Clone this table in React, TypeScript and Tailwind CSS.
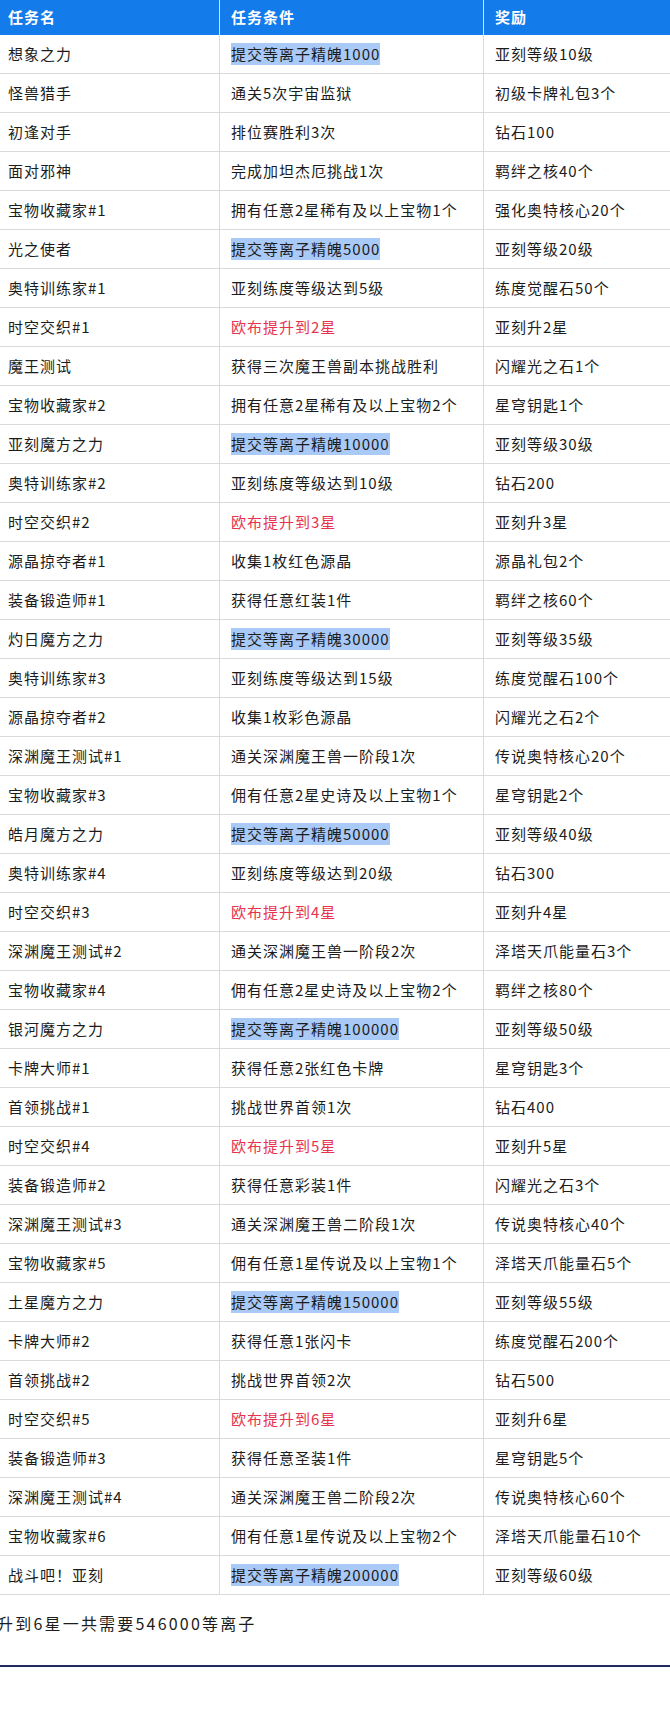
type Kind = "plain" | "hl" | "red"

type Row = [string, string, string, Kind?]

const ROWS: Row[] = [
  ["想象之力", "提交等离子精魄1000", "亚刻等级10级", "hl"],
  ["怪兽猎手", "通关5次宇宙监狱", "初级卡牌礼包3个"],
  ["初逢对手", "排位赛胜利3次", "钻石100"],
  ["面对邪神", "完成加坦杰厄挑战1次", "羁绊之核40个"],
  ["宝物收藏家#1", "拥有任意2星稀有及以上宝物1个", "强化奥特核心20个"],
  ["光之使者", "提交等离子精魄5000", "亚刻等级20级", "hl"],
  ["奥特训练家#1", "亚刻练度等级达到5级", "练度觉醒石50个"],
  ["时空交织#1", "欧布提升到2星", "亚刻升2星", "red"],
  ["魔王测试", "获得三次魔王兽副本挑战胜利", "闪耀光之石1个"],
  ["宝物收藏家#2", "拥有任意2星稀有及以上宝物2个", "星穹钥匙1个"],
  ["亚刻魔方之力", "提交等离子精魄10000", "亚刻等级30级", "hl"],
  ["奥特训练家#2", "亚刻练度等级达到10级", "钻石200"],
  ["时空交织#2", "欧布提升到3星", "亚刻升3星", "red"],
  ["源晶掠夺者#1", "收集1枚红色源晶", "源晶礼包2个"],
  ["装备锻造师#1", "获得任意红装1件", "羁绊之核60个"],
  ["灼日魔方之力", "提交等离子精魄30000", "亚刻等级35级", "hl"],
  ["奥特训练家#3", "亚刻练度等级达到15级", "练度觉醒石100个"],
  ["源晶掠夺者#2", "收集1枚彩色源晶", "闪耀光之石2个"],
  ["深渊魔王测试#1", "通关深渊魔王兽一阶段1次", "传说奥特核心20个"],
  ["宝物收藏家#3", "佣有任意2星史诗及以上宝物1个", "星穹钥匙2个"],
  ["皓月魔方之力", "提交等离子精魄50000", "亚刻等级40级", "hl"],
  ["奥特训练家#4", "亚刻练度等级达到20级", "钻石300"],
  ["时空交织#3", "欧布提升到4星", "亚刻升4星", "red"],
  ["深渊魔王测试#2", "通关深渊魔王兽一阶段2次", "泽塔天爪能量石3个"],
  ["宝物收藏家#4", "佣有任意2星史诗及以上宝物2个", "羁绊之核80个"],
  ["银河魔方之力", "提交等离子精魄100000", "亚刻等级50级", "hl"],
  ["卡牌大师#1", "获得任意2张红色卡牌", "星穹钥匙3个"],
  ["首领挑战#1", "挑战世界首领1次", "钻石400"],
  ["时空交织#4", "欧布提升到5星", "亚刻升5星", "red"],
  ["装备锻造师#2", "获得任意彩装1件", "闪耀光之石3个"],
  ["深渊魔王测试#3", "通关深渊魔王兽二阶段1次", "传说奥特核心40个"],
  ["宝物收藏家#5", "佣有任意1星传说及以上宝物1个", "泽塔天爪能量石5个"],
  ["土星魔方之力", "提交等离子精魄150000", "亚刻等级55级", "hl"],
  ["卡牌大师#2", "获得任意1张闪卡", "练度觉醒石200个"],
  ["首领挑战#2", "挑战世界首领2次", "钻石500"],
  ["时空交织#5", "欧布提升到6星", "亚刻升6星", "red"],
  ["装备锻造师#3", "获得任意圣装1件", "星穹钥匙5个"],
  ["深渊魔王测试#4", "通关深渊魔王兽二阶段2次", "传说奥特核心60个"],
  ["宝物收藏家#6", "佣有任意1星传说及以上宝物2个", "泽塔天爪能量石10个"],
  ["战斗吧！亚刻", "提交等离子精魄200000", "亚刻等级60级", "hl"],
]

const FONT = "font-['Noto_Sans_CJK_SC','Noto_Sans',sans-serif]"

function Condition({ text, kind }: { text: string; kind?: Kind }) {
  if (kind === "hl") return <span className="bg-[#a9c9f7]">{text}</span>
  if (kind === "red") return <span className="text-[#e8334f]">{text}</span>
  return <span>{text}</span>
}

export default function App() {
  return (
    <div className={`w-[670px] overflow-hidden bg-white text-[#1c1c1c] ${FONT}`}>
      <div className="-ml-[3px] w-[673px]">
        <div className="grid h-[35px] grid-cols-[223px_264px_186px] bg-[#137bea] text-[15px] font-bold tracking-[1px] text-white">
          <div className="flex items-center border-r border-[#d6e2f3] pl-[11px]">任务名</div>
          <div className="flex items-center border-r border-[#d6e2f3] pl-[11px]">任务条件</div>
          <div className="flex items-center pl-[11px]">奖励</div>
        </div>
        {ROWS.map(([name, cond, reward, kind]) => (
          <div
            key={name}
            className="grid h-[39px] grid-cols-[223px_264px_186px] border-b border-[#dadada] text-[15px] tracking-[1px]"
          >
            <div className="flex items-center border-r border-[#dadada] pl-[11px] whitespace-nowrap">{name}</div>
            <div className="flex items-center border-r border-[#dadada] pl-[11px] whitespace-nowrap">
              <Condition text={cond} kind={kind} />
            </div>
            <div className="flex items-center pl-[11px] whitespace-nowrap">{reward}</div>
          </div>
        ))}
        <p className="mt-[16px] h-[24px] text-[16px] leading-[24px] tracking-[2.2px] whitespace-nowrap">
          升到6星一共需要546000等离子
        </p>
      </div>
      <div className="mt-[30px] border-t-2 border-[#1f2a5e]" />
      <div className="h-[49px]" />
    </div>
  )
}
